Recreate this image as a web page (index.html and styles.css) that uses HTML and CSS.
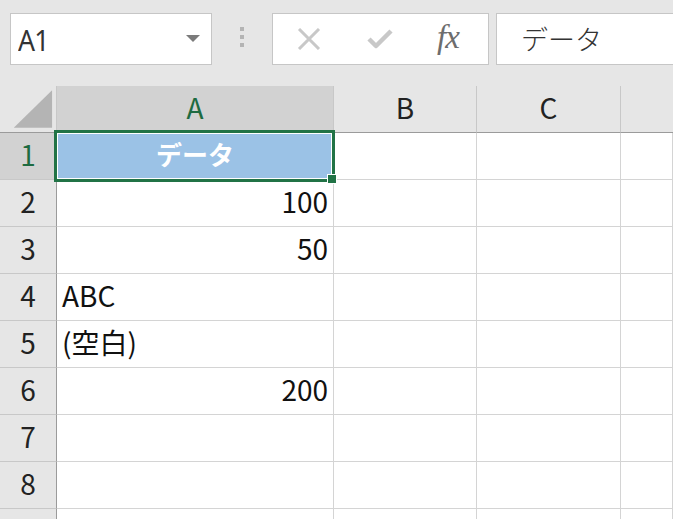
FILE: index.html
```html
<!DOCTYPE html>
<html lang="ja">
<head>
<meta charset="utf-8">
<title>Excel</title>
<link rel="stylesheet" href="styles.css">
</head>
<body>
<div class="app">
  <div class="toolbar">
    <div class="namebox">
      <span class="namebox-text">A1</span>
      <span class="namebox-arrow"></span>
    </div>
    <div class="grip"><span></span><span></span><span></span></div>
    <div class="buttons">
      <svg class="btn-icon" width="24" height="22" viewBox="0 0 24 22"><path d="M2 1 L22 21 M22 1 L2 21" stroke="#c8c8c8" stroke-width="3" fill="none"/></svg>
      <svg class="btn-icon" width="26" height="22" viewBox="0 0 26 22"><path d="M2 11 L9 18 L24 3" stroke="#c8c8c8" stroke-width="4.5" fill="none" stroke-linejoin="round"/></svg>
      <span class="fx">fx</span>
    </div>
    <div class="formula">データ</div>
  </div>
  <div class="sheet-wrap">
    <div class="sheet">
      <div class="corner"><svg width="57" height="46" viewBox="0 0 57 46"><polygon points="14,42 53,4 53,42" fill="#b4b4b4"/></svg></div>
      <div class="colh sel">A</div>
      <div class="colh">B</div>
      <div class="colh">C</div>
      <div class="colh last"></div>

      <div class="rowh sel">1</div>
      <div class="cell a1">データ</div>
      <div class="cell"></div><div class="cell"></div><div class="cell"></div>

      <div class="rowh">2</div>
      <div class="cell num">100</div>
      <div class="cell"></div><div class="cell"></div><div class="cell"></div>

      <div class="rowh">3</div>
      <div class="cell num">50</div>
      <div class="cell"></div><div class="cell"></div><div class="cell"></div>

      <div class="rowh">4</div>
      <div class="cell txt">ABC</div>
      <div class="cell"></div><div class="cell"></div><div class="cell"></div>

      <div class="rowh">5</div>
      <div class="cell txt">(空白)</div>
      <div class="cell"></div><div class="cell"></div><div class="cell"></div>

      <div class="rowh">6</div>
      <div class="cell num">200</div>
      <div class="cell"></div><div class="cell"></div><div class="cell"></div>

      <div class="rowh">7</div>
      <div class="cell"></div>
      <div class="cell"></div><div class="cell"></div><div class="cell"></div>

      <div class="rowh">8</div>
      <div class="cell"></div>
      <div class="cell"></div><div class="cell"></div><div class="cell"></div>

      <div class="rowh"></div>
      <div class="cell"></div>
      <div class="cell"></div><div class="cell"></div><div class="cell"></div>
    </div>
    <div class="selection"></div>
    <div class="handle"></div>
  </div>
</div>
</body>
</html>
```

FILE: styles.css
```css
html, body {
  margin: 0;
  padding: 0;
  width: 673px;
  height: 519px;
  overflow: hidden;
  background: #e6e6e6;
  font-family: "Noto Sans CJK JP", "Noto Sans", sans-serif;
}

.app {
  display: flex;
  flex-direction: column;
}

.toolbar {
  height: 86px;
  box-sizing: border-box;
  padding: 13px 0 0 10px;
  display: flex;
  align-items: flex-start;
}

.namebox {
  width: 202px;
  height: 52px;
  box-sizing: border-box;
  background: #fff;
  border: 1px solid #c6c6c6;
  display: flex;
  align-items: center;
  justify-content: space-between;
  padding: 0 11px 0 7px;
}

.namebox-text {
  font-family: "Noto Sans", sans-serif;
  font-size: 29px;
  color: #333;
  letter-spacing: -1px;
  transform: scaleX(0.92);
  transform-origin: left center;
}

.namebox-arrow {
  width: 0;
  height: 0;
  border-left: 7px solid transparent;
  border-right: 7px solid transparent;
  border-top: 7px solid #7b7b7b;
  margin-top: -2px;
}

.grip {
  width: 60px;
  height: 52px;
  display: flex;
  flex-direction: column;
  align-items: center;
  justify-content: center;
  gap: 4px;
  padding-bottom: 4px;
  box-sizing: border-box;
}

.grip span {
  width: 4px;
  height: 4px;
  background: #b4b4b4;
}

.buttons {
  width: 217px;
  height: 52px;
  box-sizing: border-box;
  background: #fff;
  border: 1px solid #c6c6c6;
  display: flex;
  align-items: center;
  padding-left: 24px;
}

.btn-icon {
  display: block;
  margin-right: 46px;
}

.btn-icon + .btn-icon {
  margin-right: 44px;
}

.fx {
  font-family: "Liberation Serif", serif;
  font-style: italic;
  font-size: 33px;
  color: #6d6d6d;
  letter-spacing: -1px;
  margin-top: -4px;
}

.formula {
  flex: 1;
  margin-left: 7px;
  height: 52px;
  box-sizing: border-box;
  background: #fff;
  border: 1px solid #c6c6c6;
  border-right: none;
  display: flex;
  align-items: center;
  padding-left: 24px;
  padding-bottom: 2px;
  font-size: 27px;
  font-weight: 300;
  color: #333;
}

.sheet-wrap {
  position: relative;
  background: #fff;
}

.sheet {
  display: grid;
  grid-template-columns: 57px 277px 143px 144px 1fr;
  grid-auto-rows: 47px;
}

.sheet > div {
  box-sizing: border-box;
  display: flex;
  align-items: center;
  padding-bottom: 5px;
  font-size: 28px;
  color: #111;
  white-space: nowrap;
  overflow: hidden;
}

.corner {
  background: #e6e6e6;
  border-right: 1px solid #c8c8c8;
  border-bottom: 1px solid #9b9b9b;
  padding-bottom: 0 !important;
}

.corner svg {
  display: block;
}

.colh {
  background: #e6e6e6;
  border-right: 1px solid #c8c8c8;
  border-bottom: 1px solid #9b9b9b;
  justify-content: center;
  color: #222 !important;
}

.colh.last {
  border-right: none;
}

.colh.sel {
  background: #d2d2d2;
  color: #1e6b41 !important;
}

.rowh {
  background: #e6e6e6;
  border-right: 1px solid #9b9b9b;
  border-bottom: 1px solid #c8c8c8;
  justify-content: center;
  color: #222 !important;
}

.rowh.sel {
  background: #d2d2d2;
  color: #1e6b41 !important;
}

.cell {
  background: #fff;
  border-right: 1px solid #d4d4d4;
  border-bottom: 1px solid #d4d4d4;
}

.cell.num {
  justify-content: flex-end;
  padding-right: 5px;
}

.cell.txt {
  padding-left: 5px;
}

.cell.a1 {
  background: #9bc2e6;
  justify-content: center;
  color: #fff !important;
  font-weight: 700;
  font-size: 26px;
}

.selection {
  position: absolute;
  left: 54px;
  top: 44px;
  width: 281px;
  height: 52px;
  box-sizing: border-box;
  border: 3px solid #217346;
  box-shadow: inset 0 0 0 1px #fff;
}

.handle {
  position: absolute;
  left: 327px;
  top: 88px;
  width: 10px;
  height: 10px;
  box-sizing: border-box;
  background: #217346;
  border: 1px solid #fff;
}
```
